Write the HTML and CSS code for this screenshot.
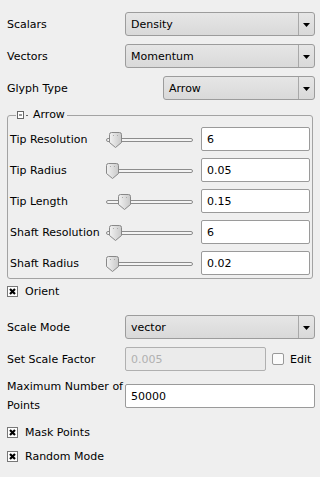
FILE: index.html
```html
<!DOCTYPE html>
<html>
<head>
<meta charset="utf-8">
<link rel="stylesheet" href="styles.css">
</head>
<body>
<div class="panel">
  <div class="row top first">
    <span class="label">Scalars</span>
    <div class="combo wide"><span class="combo-text">Density</span><span class="combo-btn"><svg width="7" height="4" viewBox="0 0 7 4"><path d="M0 0H7L3.5 4Z" fill="#000"/></svg></span></div>
  </div>
  <div class="row top">
    <span class="label">Vectors</span>
    <div class="combo wide"><span class="combo-text">Momentum</span><span class="combo-btn"><svg width="7" height="4" viewBox="0 0 7 4"><path d="M0 0H7L3.5 4Z" fill="#000"/></svg></span></div>
  </div>
  <div class="row top">
    <span class="label grow">Glyph Type</span>
    <div class="combo narrow"><span class="combo-text">Arrow</span><span class="combo-btn"><svg width="7" height="4" viewBox="0 0 7 4"><path d="M0 0H7L3.5 4Z" fill="#000"/></svg></span></div>
  </div>

  <div class="group">
    <div class="group-title">
      <svg width="14" height="9" viewBox="0 0 14 9"><rect x="0.5" y="0.5" width="6" height="7" fill="#fff" stroke="#666"/><path d="M2 4H5" stroke="#333"/><path d="M9 4.5H11" stroke="#666"/></svg>
      <span>Arrow</span>
    </div>
    <div class="grow-row">
      <span class="glabel">Tip Resolution</span>
      <div class="slider"><div class="groove"></div><svg class="handle" style="left:3px" width="13" height="16" viewBox="0 0 13 16"><defs><linearGradient id="hg" x1="0" y1="0" x2="1" y2="0"><stop offset="0" stop-color="#f2f2f2"/><stop offset="1" stop-color="#c9c9c9"/></linearGradient></defs><path d="M2.5 0.5H10.5Q12.5 0.5 12.5 2.5V10.5L6.5 15.5L0.5 10.5V2.5Q0.5 0.5 2.5 0.5Z" fill="url(#hg)" stroke="#888"/><rect x="4" y="3" width="1" height="1" fill="#aaa"/><rect x="8" y="3" width="1" height="1" fill="#aaa"/></svg></div>
      <div class="field">6</div>
    </div>
    <div class="grow-row">
      <span class="glabel">Tip Radius</span>
      <div class="slider"><div class="groove"></div><svg class="handle" style="left:0px" width="13" height="16" viewBox="0 0 13 16"><path d="M2.5 0.5H10.5Q12.5 0.5 12.5 2.5V10.5L6.5 15.5L0.5 10.5V2.5Q0.5 0.5 2.5 0.5Z" fill="url(#hg)" stroke="#888"/><rect x="4" y="3" width="1" height="1" fill="#aaa"/><rect x="8" y="3" width="1" height="1" fill="#aaa"/></svg></div>
      <div class="field">0.05</div>
    </div>
    <div class="grow-row">
      <span class="glabel">Tip Length</span>
      <div class="slider"><div class="groove"></div><svg class="handle" style="left:12px" width="13" height="16" viewBox="0 0 13 16"><path d="M2.5 0.5H10.5Q12.5 0.5 12.5 2.5V10.5L6.5 15.5L0.5 10.5V2.5Q0.5 0.5 2.5 0.5Z" fill="url(#hg)" stroke="#888"/><rect x="4" y="3" width="1" height="1" fill="#aaa"/><rect x="8" y="3" width="1" height="1" fill="#aaa"/></svg></div>
      <div class="field">0.15</div>
    </div>
    <div class="grow-row">
      <span class="glabel">Shaft Resolution</span>
      <div class="slider"><div class="groove"></div><svg class="handle" style="left:3px" width="13" height="16" viewBox="0 0 13 16"><path d="M2.5 0.5H10.5Q12.5 0.5 12.5 2.5V10.5L6.5 15.5L0.5 10.5V2.5Q0.5 0.5 2.5 0.5Z" fill="url(#hg)" stroke="#888"/><rect x="4" y="3" width="1" height="1" fill="#aaa"/><rect x="8" y="3" width="1" height="1" fill="#aaa"/></svg></div>
      <div class="field">6</div>
    </div>
    <div class="grow-row">
      <span class="glabel">Shaft Radius</span>
      <div class="slider"><div class="groove"></div><svg class="handle" style="left:0px" width="13" height="16" viewBox="0 0 13 16"><path d="M2.5 0.5H10.5Q12.5 0.5 12.5 2.5V10.5L6.5 15.5L0.5 10.5V2.5Q0.5 0.5 2.5 0.5Z" fill="url(#hg)" stroke="#888"/><rect x="4" y="3" width="1" height="1" fill="#aaa"/><rect x="8" y="3" width="1" height="1" fill="#aaa"/></svg></div>
      <div class="field">0.02</div>
    </div>
  </div>

  <div class="check-row orient">
    <svg class="cb" width="11" height="11" viewBox="0 0 11 11"><rect x="0.5" y="0.5" width="10" height="10" fill="#fff" stroke="#777"/><path d="M3 3L8 8M8 3L3 8" stroke="#000" stroke-width="2.2"/></svg>
    <span>Orient</span>
  </div>
  <div class="row scale">
    <span class="label">Scale Mode</span>
    <div class="combo wide"><span class="combo-text">vector</span><span class="combo-btn"><svg width="7" height="4" viewBox="0 0 7 4"><path d="M0 0H7L3.5 4Z" fill="#000"/></svg></span></div>
  </div>
  <div class="row factor">
    <span class="label">Set Scale Factor</span>
    <div class="field disabled">0.005</div>
    <svg class="cb edit-cb" width="12" height="12" viewBox="0 0 12 12"><rect x="0.5" y="0.5" width="11" height="11" rx="1.5" fill="#fbfbfb" stroke="#999"/></svg>
    <span class="edit">Edit</span>
  </div>
  <div class="row maxrow">
    <span class="label two">Maximum Number of Points</span>
    <div class="field full">50000</div>
  </div>
  <div class="check-row mask">
    <svg class="cb" width="11" height="11" viewBox="0 0 11 11"><rect x="0.5" y="0.5" width="10" height="10" fill="#fff" stroke="#777"/><path d="M3 3L8 8M8 3L3 8" stroke="#000" stroke-width="2.2"/></svg>
    <span>Mask Points</span>
  </div>
  <div class="check-row random">
    <svg class="cb" width="11" height="11" viewBox="0 0 11 11"><rect x="0.5" y="0.5" width="10" height="10" fill="#fff" stroke="#777"/><path d="M3 3L8 8M8 3L3 8" stroke="#000" stroke-width="2.2"/></svg>
    <span>Random Mode</span>
  </div>
</div>
</body>
</html>
```

FILE: styles.css
```css
html, body {
  margin: 0;
  padding: 0;
  background: #efefef;
}
body {
  width: 320px;
  height: 477px;
  overflow: hidden;
  font-family: "DejaVu Sans", sans-serif;
  font-size: 11px;
  color: #000;
}
.panel {
  display: flex;
  flex-direction: column;
  padding: 12px 5px 0 7px;
}
.row {
  display: flex;
  align-items: center;
  height: 24px;
}
.top + .top {
  margin-top: 8px;
}
.label {
  width: 118px;
  flex: none;
  line-height: 19px;
}
.label.grow {
  width: auto;
  flex: 1;
}
.combo {
  display: flex;
  align-items: stretch;
  height: 24px;
  box-sizing: border-box;
  border: 1px solid #9c9c9c;
  border-radius: 3px;
  background: linear-gradient(#e6e6e6, #d9d9d9);
}
.combo.wide {
  width: 190px;
}
.combo.narrow {
  width: 152px;
}
.combo-text {
  flex: 1;
  padding-left: 5px;
  display: flex;
  align-items: center;
}
.combo-btn {
  width: 15px;
  border-left: 1px solid #a8a8a8;
  display: flex;
  align-items: center;
  justify-content: center;
  padding-top: 1px;
}
.group {
  position: relative;
  margin-top: 15px;
  width: 306px;
  box-sizing: border-box;
  border: 1px solid #a3a3a3;
  border-radius: 3px;
  padding: 11px 2px 3px 2px;
  display: flex;
  flex-direction: column;
  gap: 7px;
}
.group-title {
  position: absolute;
  left: 8px;
  top: -8px;
  display: flex;
  align-items: center;
  gap: 2px;
  padding: 0 2px 0 1px;
  background: #efefef;
  line-height: 14px;
}
.group-title svg {
  margin-top: 1px;
}
.grow-row {
  display: flex;
  align-items: center;
  height: 24px;
}
.glabel {
  width: 96px;
  flex: none;
}
.slider {
  position: relative;
  width: 87px;
  height: 24px;
  flex: none;
}
.groove {
  position: absolute;
  left: 0;
  right: 0;
  top: 11px;
  height: 4px;
  box-sizing: border-box;
  border: 1px solid #8c8c8c;
  border-radius: 2px;
  background: #f4f4f4;
}
.handle {
  position: absolute;
  top: 5px;
}
.field {
  margin-left: 8px;
  width: 109px;
  height: 24px;
  box-sizing: border-box;
  border: 1px solid #9a9a9a;
  border-radius: 2px;
  background: #fff;
  padding-left: 5px;
  display: flex;
  align-items: center;
}
.factor .field {
  margin-left: 0;
  width: 141px;
}
.field.disabled {
  background: #ebebeb;
  color: #b0b0b0;
  border-color: #b0b0b0;
}
.field.full {
  margin-left: 0;
  width: 190px;
}
.edit-cb {
  margin-left: 6px;
}
.edit {
  margin-left: 6px;
}
.check-row {
  display: flex;
  align-items: center;
  height: 16px;
  gap: 7px;
}
.cb {
  flex: none;
  display: block;
}
.orient {
  margin-top: 4px;
}
.scale {
  margin-top: 16px;
}
.factor {
  margin-top: 8px;
}
.maxrow {
  margin-top: 6px;
  height: 38px;
}
.label.two {
  width: 118px;
}
.mask {
  margin-top: 9px;
}
.random {
  margin-top: 8px;
}
```
